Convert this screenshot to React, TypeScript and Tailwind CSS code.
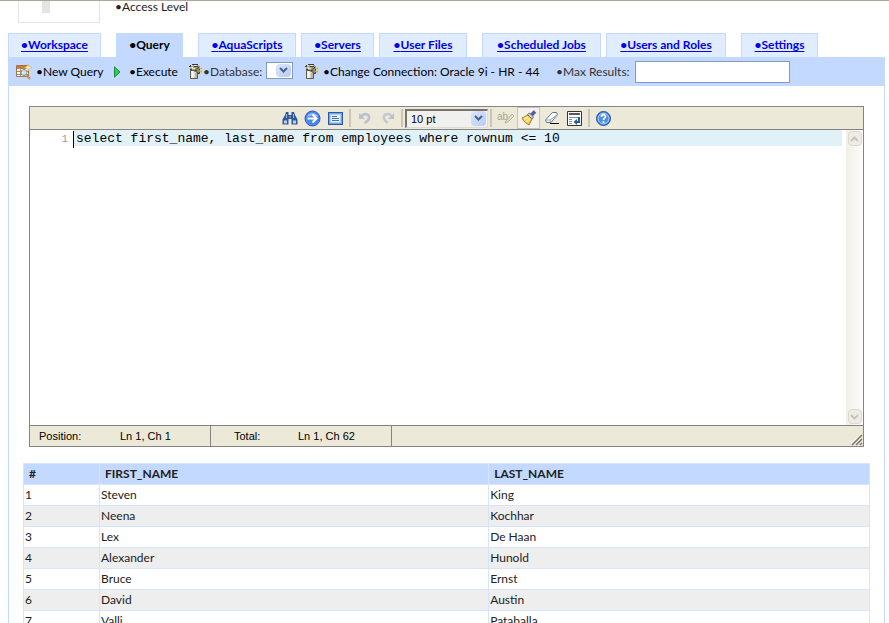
import type { ReactNode } from 'react';

const tabs = [
  { label: 'Workspace', box: 'w-[93px] mr-[15px]' },
  { label: 'Query', box: 'w-[67px] mr-[15px]', active: true },
  { label: 'AquaScripts', box: 'w-[98px] mr-[5px]' },
  { label: 'Servers', box: 'w-[73px] mr-[5px]' },
  { label: 'User Files', box: 'w-[88px] mr-[15px]' },
  { label: 'Scheduled Jobs', box: 'w-[119px] mr-[5px]' },
  { label: 'Users and Roles', box: 'w-[120px] mr-[15px]' },
  { label: 'Settings', box: 'w-[77px]' },
];

const rows = [
  ['Steven', 'King'],
  ['Neena', 'Kochhar'],
  ['Lex', 'De Haan'],
  ['Alexander', 'Hunold'],
  ['Bruce', 'Ernst'],
  ['David', 'Austin'],
  ['Valli', 'Pataballa'],
];

function NewQueryIcon() {
  return (
    <svg width="16" height="16" viewBox="0 0 16 16" className="shrink-0">
      <path d="M.5 1.5h12v11H.5z" fill="#fff" stroke="#a07848" />
      <path d="M1 2h11v2H1z" fill="#d8762a" />
      <path d="M1 4.500h11M1 7.500h11M1 10.500h11M4.500 4v9M8.500 4v9" stroke="#a58a60" />
      <circle cx="8" cy="8.500" r="3" fill="#d4e8f0" fillOpacity=".85" stroke="#7f948e" />
      <path d="M10.500 11l3.500 4" stroke="#c8924a" strokeWidth="2" />
      <path d="M12 0l1 2.500L16 3.500 13 4.500 12 7 11 4.500 8.500 3.500 11 2.500z" fill="#fffbe0" stroke="#e0b040" strokeWidth=".6" />
    </svg>
  );
}

function PlayIcon() {
  return (
    <svg width="7" height="12" viewBox="0 0 7 12" className="shrink-0">
      <path d="M.5 .8v10.400L6 6z" fill="#48c058" stroke="#16903a" />
    </svg>
  );
}

function ConnectionIcon() {
  return (
    <svg width="14" height="16" viewBox="0 0 14 16" className="shrink-0">
      <path d="M1 2h3V1h6v1h1v2H8v3H1z" fill="#a5a38c" />
      <path d="M0 2.500h2M3 .5h6M1 5.500h2M1.500 1v2M5 2.500h4" stroke="#3f3d33" fill="none" />
      <path d="M2 3.500h2M5 1.500h3M3 4.500h3" stroke="#e6e4d0" />
      <path d="M1.500 6.500h7v8h-7z" fill="#dddac6" stroke="#5d5a49" />
      <path d="M3.500 7v7" stroke="#fff" strokeWidth="2" />
      <path d="M5 7.500h2M7 9v5" stroke="#95927c" />
      <path d="M7 7.500V5.500L9 3.500h1.500v6H9z" fill="#8c8973" stroke="#3f3d33" />
      <path d="M10.500 4.500H13M10.500 7.500H13" stroke="#f0a000" strokeWidth="1.500" />
      <path d="M10 4h2M10 7h2" stroke="#ffe34a" strokeWidth=".8" />
    </svg>
  );
}

function Chevron({ color = '#4d6185' }: { color?: string }) {
  return (
    <svg width="9" height="6" viewBox="0 0 9 6">
      <path d="M1 1l3.500 3.500L8 1" fill="none" stroke={color} strokeWidth="2" />
    </svg>
  );
}

function DropArrow() {
  return (
    <span className="pointer-events-none absolute top-[2px] right-[2px] bottom-[2px] flex w-[15px] items-center justify-center rounded-sm bg-linear-to-br from-[#dbe6fd] to-[#b5cbf8]">
      <Chevron />
    </span>
  );
}

function ToolButton({ label, pressed, children }: { label: string; pressed?: boolean; children: ReactNode }) {
  return (
    <button
      type="button"
      aria-label={label}
      className={
        pressed
          ? 'flex h-[22px] w-[23px] items-center justify-center border border-[#c5c2b8] bg-[#f3f1e9]'
          : 'flex h-[22px] w-[23px] items-center justify-center'
      }
    >
      {children}
    </button>
  );
}

function Separator() {
  return <div className="mx-[2px] h-[18px] w-[2px] bg-[#c9c6b9]" />;
}

function EditorToolbar() {
  return (
    <div className="flex h-[23px] items-center justify-center border-b border-[#848484] bg-[#ece9d8]">
      <ToolButton label="Search">
        <svg width="16" height="14" viewBox="0 0 16 14">
          <path d="M4 1h2.500v3h3V1H12l1 3 2.500 4.500v5h-6V8h-3v5.500h-6v-5L3 4z" fill="#315896" />
          <path d="M2 9.500h3v3H2zM11 9.500h3v3h-3z" fill="#b7d1f4" />
          <path d="M4.500 3v4M11.500 3v4M8 5v2" stroke="#98bae8" />
        </svg>
      </ToolButton>
      <ToolButton label="Go to line">
        <svg width="17" height="17" viewBox="0 0 17 17">
          <circle cx="8.500" cy="8.500" r="7.500" fill="#4a88ed" stroke="#315bbb" />
          <path d="M3 7c1-5 10-5 11 0-3-2-8-2-11 0z" fill="#a2c7ff" />
          <path d="M3.500 8.500H12M8.500 4.500l4 4-4 4" fill="none" stroke="#fff" strokeWidth="2" />
        </svg>
      </ToolButton>
      <ToolButton label="Fullscreen">
        <svg width="15" height="13" viewBox="0 0 15 13">
          <rect x=".5" y=".5" width="14" height="12" fill="#72a4ef" stroke="#2c5aa8" />
          <path d="M2.500 2.500h10v8h-10z" fill="#eaf3ff" stroke="#b4cff7" />
          <path d="M4 4.500h5M4 6.500h7M4 8.500h7" stroke="#3d72c4" />
        </svg>
      </ToolButton>
      <Separator />
      <ToolButton label="Undo">
        <svg width="14" height="14" viewBox="0 0 14 14">
          <path d="M3 6c3-5 9-3 8 1.500-.5 2-2 3.500-4.500 4.500" fill="none" stroke="#b9c1cf" strokeWidth="2.500" />
          <path d="M1 2v6h6z" fill="#b9c1cf" />
        </svg>
      </ToolButton>
      <ToolButton label="Redo">
        <svg width="14" height="14" viewBox="0 0 14 14">
          <path d="M11 6C8 1 2 3 3 7.500c.5 2 2 3.500 4 4.500" fill="none" stroke="#c2c8d1" strokeWidth="2.500" />
          <path d="M13 2v6H7z" fill="#b9c1cf" />
        </svg>
      </ToolButton>
      <Separator />
      <div className="relative h-[19px] w-[83px]">
        <select
          aria-label="Font size"
          className="block h-full w-full appearance-none border border-t-2 border-l-2 border-[#e0ddd0] border-t-[#77756c] border-l-[#77756c] bg-[#f0f0ee] pl-1 font-['Liberation_Sans',sans-serif] text-[11px] leading-4 text-black"
        >
          <option>10 pt</option>
        </select>
        <DropArrow />
      </div>
      <Separator />
      <ToolButton label="Toggle syntax highlight">
        <svg width="18" height="14" viewBox="0 0 18 14">
          <text x="0" y="9" fontSize="10" fontFamily="Liberation Sans, sans-serif" fill="#aaa68a">ab</text>
          <path d="M9 10l6-7 2 2-6 6-3 1z" fill="#e1ddc8" stroke="#b7b39d" />
        </svg>
      </ToolButton>
      <ToolButton label="Highlight" pressed>
        <svg width="16" height="16" viewBox="0 0 16 16">
          <path d="M1 8l6-3 4 4-3 6c-2-1-5-3-7-7z" fill="#f2cf58" stroke="#a37b2c" />
          <path d="M3 9l4-2M5 11.500l4-3" stroke="#fff0a2" strokeWidth="1.500" />
          <path d="M6.500 4.500l2-1.500 4 4-1.500 2z" fill="#e0d9c5" stroke="#6b6258" />
          <path d="M10.500 5L14 1.500" stroke="#5858ad" strokeWidth="3.500" />
        </svg>
      </ToolButton>
      <ToolButton label="Reset highlight">
        <svg width="16" height="14" viewBox="0 0 16 14">
          <path d="M1.500 9L8.500 1.500h4l1 2L7 11.500H2.500z" fill="#fff" stroke="#66748e" />
          <path d="M1.500 9h4.500l7.500-5.500M6 9l.5 2.500" fill="none" stroke="#8ba1c4" />
          <path d="M6 12.500h9" stroke="#111" />
        </svg>
      </ToolButton>
      <ToolButton label="Toggle word wrap">
        <svg width="15" height="15" viewBox="0 0 15 15">
          <path d="M.5 .5h14v14H.5z" fill="#fff" stroke="#30343b" />
          <path d="M2 3h11" stroke="#555b66" strokeWidth="2" />
          <path d="M2 6.500h11M2 8.500h3M2 10.500h3M2 12.500h3" stroke="#8c8f96" />
          <path d="M12 6v5H9" fill="none" stroke="#245c9e" strokeWidth="2" />
          <path d="M10 8v6l-3.500-3z" fill="#245c9e" />
        </svg>
      </ToolButton>
      <Separator />
      <ToolButton label="Help">
        <svg width="15" height="15" viewBox="0 0 15 15">
          <circle cx="7.500" cy="7.500" r="7" fill="#2869c6" stroke="#2457a4" />
          <circle cx="7.500" cy="7.500" r="5.500" fill="#4a91e6" stroke="#c9e0ff" />
          <path d="M5.500 6c0-3 4-3 4-.5 0 1.500-2 1.500-2 3.500M7.500 10v2" fill="none" stroke="#fff" strokeWidth="1.700" />
        </svg>
      </ToolButton>
    </div>
  );
}

function ScrollButton({ label, up }: { label: string; up?: boolean }) {
  return (
    <button
      type="button"
      aria-label={label}
      className="flex h-[15px] w-[14px] items-center justify-center rounded-sm border border-[#dcdace] bg-[#eeede5]"
    >
      <span className={up ? 'rotate-180' : ''}>
        <Chevron color="#c6c4bb" />
      </span>
    </button>
  );
}

function Editor() {
  return (
    <div className="border border-[#848484]">
      <EditorToolbar />
      <div className="flex h-[295px] bg-white font-['Liberation_Mono',monospace] text-[13px] leading-[18px]">
        <div className="w-[38px] text-right text-[11px] text-[#999]">1</div>
        <div className="mt-px ml-[5px] h-[17px] w-px bg-black" />
        <textarea
          aria-label="SQL query"
          spellCheck={false}
          defaultValue="select first_name, last_name from employees where rownum <= 10"
          className="mr-1 block h-full flex-1 resize-none overflow-hidden bg-[linear-gradient(#e0f1f8,#e0f1f8)] bg-[length:100%_16px] bg-no-repeat pl-[2px] text-black outline-none"
        />
        <div className="flex w-[17px] flex-col items-center justify-between bg-linear-to-r from-[#f0efe8] to-[#fdfdfb] py-px">
          <ScrollButton label="Scroll up" up />
          <ScrollButton label="Scroll down" />
        </div>
      </div>
      <div className="flex h-[21px] border-t border-[#848484] bg-[#ece9d8] font-['Liberation_Sans',sans-serif] text-[11px] leading-5 text-black">
        <div className="flex w-[181px] border-r border-[#848484] pl-[9px]">
          <span className="w-[81px]">Position:</span>
          <span>Ln 1, Ch 1</span>
        </div>
        <div className="flex w-[181px] border-r border-[#848484] pl-[23px]">
          <span className="w-[64px]">Total:</span>
          <span>Ln 1, Ch 62</span>
        </div>
        <svg width="12" height="12" viewBox="0 0 12 12" className="mt-auto ml-auto">
          <path d="M1 11L11 1M5 11l6-6M9 11l2-2" stroke="#77756c" strokeWidth="1.500" />
          <path d="M0 10L10 0M4 10l6-6" stroke="#fff" strokeWidth=".7" />
        </svg>
      </div>
    </div>
  );
}

function ResultTable() {
  return (
    <table className="w-full table-fixed border-collapse text-[12px] leading-5 text-[#222]">
      <thead>
        <tr className="h-[21px] bg-[#c3d9ff] text-left">
          <th className="w-[76px] border border-[#d6e4ff] px-[5px] py-0">#</th>
          <th className="w-[46%] border border-[#d6e4ff] px-[5px] py-0">FIRST_NAME</th>
          <th className="border border-[#d6e4ff] px-[5px] py-0">LAST_NAME</th>
        </tr>
      </thead>
      <tbody>
        {rows.map(([first, last], i) => (
          <tr key={first} className="h-[21px] even:bg-[#eee]">
            <td className="border border-[#d6e4ff] px-px py-0">{i + 1}</td>
            <td className="border border-[#d6e4ff] px-px py-0">{first}</td>
            <td className="border border-[#d6e4ff] px-px py-0">{last}</td>
          </tr>
        ))}
      </tbody>
    </table>
  );
}

export default function App() {
  return (
    <div className="min-h-screen border-t border-[#aca899] bg-white pr-1 pl-2 font-[Lato,sans-serif] text-[12px] text-black">
      <div className="flex h-8 items-start">
        <div className="ml-[10px] h-[22px] w-[82px] border border-t-0 border-[#e4e4e4]">
          <div className="ml-[23px] h-3 w-2 bg-[#e4e4e4]" />
        </div>
        <div className="ml-[15px] leading-3 text-[#222]">•Access Level</div>
      </div>

      <nav className="flex h-6">
        {tabs.map((tab) => (
          <a
            key={tab.label}
            href="#"
            className={`flex shrink-0 justify-center border border-b-0 border-[#c3d9ff] leading-[22px] font-bold whitespace-nowrap ${tab.box} ${
              tab.active ? 'bg-[#c3d9ff] text-black' : 'bg-[#e0ecff] text-[#0000ee] underline underline-offset-2'
            }`}
          >
            •{tab.label}
          </a>
        ))}
      </nav>

      <div className="flex h-[29px] items-center bg-[#c3d9ff] pl-2 whitespace-nowrap">
        <button type="button" className="flex w-[98px] items-center gap-1">
          <NewQueryIcon />
          •New Query
        </button>
        <button type="button" className="flex w-[75px] items-center gap-2">
          <PlayIcon />
          •Execute
        </button>
        <ConnectionIcon />
        <label htmlFor="database" className="w-[63px] text-[#333]">•Database:</label>
        <div className="relative mb-[3px] h-[17px] w-[27px]">
          <select id="database" className="block h-full w-full appearance-none border border-[#7f9db9] bg-white" />
          <DropArrow />
        </div>
        <button type="button" className="ml-3 flex w-[251px] items-center gap-1">
          <ConnectionIcon />
          •Change Connection: Oracle 9i - HR - 44
        </button>
        <label htmlFor="max-results" className="w-[79px] text-[#333]">•Max Results:</label>
        <input id="max-results" type="text" className="h-[22px] w-[155px] border border-[#7f9db9] bg-white px-1" />
      </div>

      <div className="border-x border-[#c3d9ff] pt-5 pr-[14px] pl-[14px]">
        <div className="mr-[6px] ml-[6px]">
          <Editor />
        </div>
        <div className="mt-4">
          <ResultTable />
        </div>
      </div>
    </div>
  );
}
